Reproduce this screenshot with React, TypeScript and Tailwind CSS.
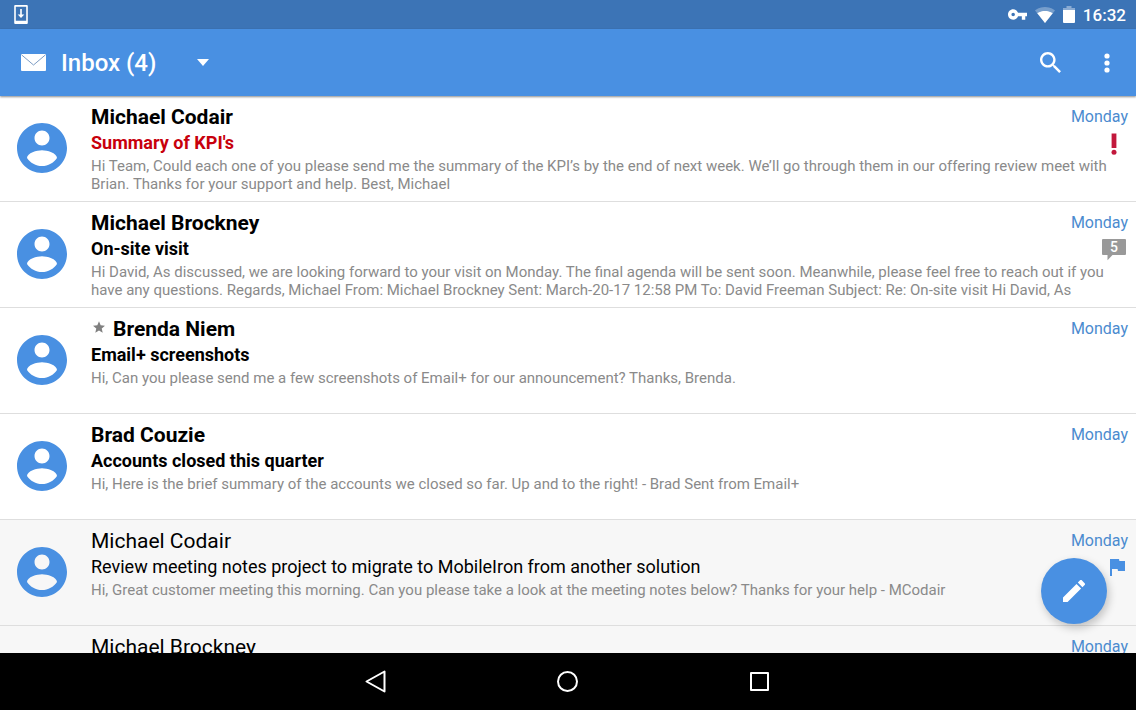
import React from "react";

type Marker = "important" | "thread" | "flag";

interface Mail {
  id: number;
  sender: string;
  subject: string;
  preview: string;
  day: string;
  unread: boolean;
  urgent?: boolean;
  starred?: boolean;
  marker?: Marker;
  count?: number;
}

const mails: Mail[] = [
  {
    id: 1,
    sender: "Michael Codair",
    subject: "Summary of KPI's",
    preview:
      "Hi Team, Could each one of you please send me the summary of the KPI’s by the end of next week. We’ll go through them in our offering review meet with Brian. Thanks for your support and help. Best, Michael",
    day: "Monday",
    unread: true,
    urgent: true,
    marker: "important",
  },
  {
    id: 2,
    sender: "Michael Brockney",
    subject: "On-site visit",
    preview:
      "Hi David, As discussed, we are looking forward to your visit on Monday. The final agenda will be sent soon. Meanwhile, please feel free to reach out if you have any questions. Regards, Michael From: Michael Brockney Sent: March-20-17 12:58 PM To: David Freeman Subject: Re: On-site visit Hi David, As",
    day: "Monday",
    unread: true,
    marker: "thread",
    count: 5,
  },
  {
    id: 3,
    sender: "Brenda Niem",
    subject: "Email+ screenshots",
    preview:
      "Hi, Can you please send me a few screenshots of Email+ for our announcement? Thanks, Brenda.",
    day: "Monday",
    unread: true,
    starred: true,
  },
  {
    id: 4,
    sender: "Brad Couzie",
    subject: "Accounts closed this quarter",
    preview:
      "Hi, Here is the brief summary of the accounts we closed so far. Up and to the right! - Brad Sent from Email+",
    day: "Monday",
    unread: true,
  },
  {
    id: 5,
    sender: "Michael Codair",
    subject: "Review meeting notes project to migrate to MobileIron from another solution",
    preview:
      "Hi, Great customer meeting this morning. Can you please take a look at the meeting notes below? Thanks for your help - MCodair",
    day: "Monday",
    unread: false,
    marker: "flag",
  },
  {
    id: 6,
    sender: "Michael Brockney",
    subject: "",
    preview: "",
    day: "Monday",
    unread: false,
  },
];

function Avatar() {
  return (
    <svg viewBox="2 2 20 20" className="size-[50px] fill-[#4990e2]" aria-hidden="true">
      <path d="M12 2C6.48 2 2 6.48 2 12s4.48 10 10 10 10-4.48 10-10S17.52 2 12 2zm0 3c1.66 0 3 1.34 3 3s-1.34 3-3 3-3-1.34-3-3 1.34-3 3-3zm0 14.2c-2.5 0-4.71-1.28-6-3.22.03-1.99 4-3.08 6-3.08 1.99 0 5.97 1.09 6 3.08-1.29 1.94-3.5 3.22-6 3.22z" />
    </svg>
  );
}

function MarkerIcon({ mail }: { mail: Mail }) {
  if (mail.marker === "important") {
    return (
      <svg viewBox="0 0 6 22" className="mr-[11px] h-[22px] w-1.5 fill-[#c2183c]" aria-label="Important">
        <path d="M0.6 0.500h4.8v14.500h-4.8z" />
        <circle cx="3" cy="19.2" r="2.5" />
      </svg>
    );
  }
  if (mail.marker === "thread") {
    return (
      <span className="relative mr-0.5 flex h-[22px] w-6 justify-center">
        <svg viewBox="0 0 24 22" className="absolute inset-0 fill-[#999999]" aria-hidden="true">
          <path d="M1 0h22a1 1 0 0 1 1 1v14a1 1 0 0 1-1 1H10.500l-5 5.200V16H1a1 1 0 0 1-1-1V1a1 1 0 0 1 1-1z" />
        </svg>
        <span className="relative text-sm leading-4 font-medium text-white">{mail.count}</span>
      </span>
    );
  }
  if (mail.marker === "flag") {
    return (
      <svg viewBox="5 4 15 17" className="mr-[3px] mb-[3px] h-[17px] w-[15px] fill-[#4990e2]" aria-label="Flagged">
        <path d="M14.4 6L14 4H5v17h2v-7h5.600l.4 2h7V6z" />
      </svg>
    );
  }
  return null;
}

function MailRow({ mail }: { mail: Mail }) {
  return (
    <li
      className={`flex h-[106px] shrink-0 items-start border-b border-[#dedede] pr-2 ${
        mail.unread ? "bg-white" : "bg-[#f7f7f7]"
      }`}
    >
      <div className="w-[91px] shrink-0 pt-[27px] pl-[17px]">
        <Avatar />
      </div>
      <div className="min-w-0 grow pt-[7px]">
        <div className="flex h-7 items-start justify-between">
          <h2
            className={`flex items-center text-[21px] leading-7 text-black ${
              mail.unread ? "font-bold" : "font-normal"
            }`}
          >
            {mail.starred && (
              <svg viewBox="2 2 20 19" className="mr-2 mb-1 ml-0.5 h-3 w-3 fill-[#808080]" aria-label="Starred">
                <path d="M12 17.270L18.180 21l-1.640-7.030L22 9.240l-7.190-.61L12 2 9.190 8.630 2 9.240l5.460 4.730L5.820 21z" />
              </svg>
            )}
            {mail.sender}
          </h2>
          <span className="text-base leading-7 text-[#4b8bcf]">{mail.day}</span>
        </div>
        <div className="flex h-6 items-end justify-between">
          <h3
            className={`text-lg leading-6 ${mail.unread ? "font-bold" : "font-normal"} ${
              mail.urgent ? "text-[#c8000c]" : "text-black"
            }`}
          >
            {mail.subject}
          </h3>
          <MarkerIcon mail={mail} />
        </div>
        <p className="mt-0.5 line-clamp-2 text-[15px] leading-[18px] text-[#8a8a8a]">{mail.preview}</p>
      </div>
    </li>
  );
}

function StatusBar() {
  return (
    <div className="flex h-[29px] shrink-0 items-center justify-between bg-[#3c74b6] pr-2.5 pl-3.5 text-white">
      <svg viewBox="0 0 14 19" className="h-[19px] w-3.5" aria-label="Update available">
        <path
          d="M1.200 0h11.600a1 1 0 0 1 1 1v17a1 1 0 0 1-1 1H1.200a1 1 0 0 1-1-1V1a1 1 0 0 1 1-1zM1.800 1.800v14h10.400v-14zM6.200 4h1.600v5.500H10.300L7 13 3.700 9.500h2.500z"
          fill="currentColor"
          fillRule="evenodd"
        />
      </svg>
      <div className="flex items-center">
        <svg viewBox="1 6 22 12" className="mr-2 h-[11px] w-[19px] fill-white" aria-label="VPN">
          <path d="M12.650 10C11.830 7.670 9.610 6 7 6c-3.310 0-6 2.690-6 6s2.690 6 6 6c2.610 0 4.830-1.670 5.650-4H17v4h4v-4h2v-4H12.650zM7 14c-1.100 0-2-.9-2-2s.9-2 2-2 2 .9 2 2-.9 2-2 2z" />
        </svg>
        <svg viewBox="0 0 20 16" className="mr-2 h-4 w-5 fill-white" aria-label="Wi-Fi">
          <path opacity="0.3" d="M10 16L0 3.400C.5 3 4.200 0 10 0s9.500 3 10 3.400z" />
          <path d="M10 16L2.300 6.200C2.700 5.900 5.500 3.900 10 3.900s7.300 2 7.700 2.300z" />
        </svg>
        <svg viewBox="0 0 12 17" className="mr-2 h-[17px] w-3 fill-white" aria-label="Battery">
          <path opacity="0.4" d="M3.500 0h5v2H12v3H0V2h3.500z" />
          <path d="M0 4h12v12a1 1 0 0 1-1 1H1a1 1 0 0 1-1-1z" />
        </svg>
        <time className="text-[17px] leading-5 font-medium">16:32</time>
      </div>
    </div>
  );
}

function AppBar() {
  return (
    <header className="z-10 flex h-[67px] shrink-0 items-center bg-[#4990e2] pr-4 pl-[21px] text-white shadow-[0_1px_2px_rgba(0,0,0,0.45)]">
      <svg viewBox="0 0 25 17" className="mr-[15px] h-[17px] w-[25px]" aria-hidden="true">
        <rect width="25" height="17" rx="1" fill="white" />
        <path d="M0.500 0.800L12.500 11L24.500 0.800" fill="none" stroke="#7c9cc4" strokeWidth="1" />
      </svg>
      <h1 className="text-2xl leading-8 font-medium">Inbox (4)</h1>
      <button type="button" aria-label="Choose folder" className="ml-[31px] p-2.5">
        <svg viewBox="0 0 12 7" className="h-[7px] w-3 fill-white" aria-hidden="true">
          <path d="M0 0h12L6 7z" />
        </svg>
      </button>
      <div className="ml-auto flex items-center gap-[29px]">
        <button type="button" aria-label="Search" className="p-1">
          <svg viewBox="3 3 17.500 17.500" className="size-[21px] fill-white" aria-hidden="true">
            <path d="M15.500 14h-.79l-.28-.27C15.410 12.590 16 11.110 16 9.500 16 5.910 13.090 3 9.500 3S3 5.910 3 9.500 5.910 16 9.500 16c1.610 0 3.090-.59 4.230-1.570l.27.28v.79l5 4.990L20.490 19l-4.990-5zm-6 0C7.010 14 5 11.990 5 9.500S7.010 5 9.500 5 14 7.010 14 9.500 11.990 14 9.500 14z" />
          </svg>
        </button>
        <button type="button" aria-label="More options" className="px-2.5 py-1">
          <svg viewBox="0 0 6 20" className="h-5 w-1.5 fill-white" aria-hidden="true">
            <circle cx="3" cy="3" r="2.600" />
            <circle cx="3" cy="10" r="2.600" />
            <circle cx="3" cy="17" r="2.600" />
          </svg>
        </button>
      </div>
    </header>
  );
}

function NavBar() {
  return (
    <nav className="flex h-[57px] shrink-0 items-center justify-center gap-[152px] bg-black">
      <button type="button" aria-label="Back" className="p-2">
        <svg viewBox="0 0 24 24" className="size-6 fill-none stroke-white" strokeWidth="2" strokeLinejoin="round" aria-hidden="true">
          <path d="M20.500 1.500v20L2.500 11.500z" />
        </svg>
      </button>
      <button type="button" aria-label="Home" className="p-2">
        <svg viewBox="0 0 24 24" className="size-6 fill-none stroke-white" strokeWidth="2" aria-hidden="true">
          <circle cx="11.500" cy="11.500" r="9.500" />
        </svg>
      </button>
      <button type="button" aria-label="Recent apps" className="p-2">
        <svg viewBox="0 0 24 24" className="size-6 fill-none stroke-white" strokeWidth="2" strokeLinejoin="round" aria-hidden="true">
          <path d="M3 3h17v17H3z" />
        </svg>
      </button>
    </nav>
  );
}

export default function App() {
  return (
    <div className="flex h-screen flex-col overflow-hidden bg-white font-['Roboto',sans-serif]">
      <StatusBar />
      <AppBar />
      <main className="relative min-h-0 grow overflow-hidden">
        <ul className="flex flex-col">
          {mails.map((mail) => (
            <MailRow key={mail.id} mail={mail} />
          ))}
        </ul>
        <button
          type="button"
          aria-label="Compose"
          className="absolute right-[29px] bottom-[29px] flex size-[66px] items-center justify-center rounded-full bg-[#4990e2] shadow-[2px_4px_8px_rgba(0,0,0,0.22)]"
        >
          <svg viewBox="3 3 18 18" className="size-[22px] fill-white" aria-hidden="true">
            <path d="M3 17.250V21h3.750L17.810 9.940l-3.750-3.750L3 17.250zM20.710 7.040c.39-.39.39-1.020 0-1.410l-2.340-2.340c-.39-.39-1.020-.39-1.410 0l-1.830 1.830 3.750 3.750 1.830-1.830z" />
          </svg>
        </button>
      </main>
      <NavBar />
    </div>
  );
}
